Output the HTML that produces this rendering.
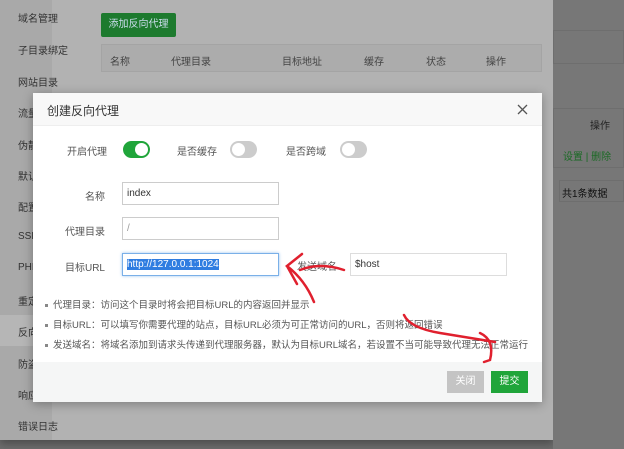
<!DOCTYPE html>
<html><head><meta charset="utf-8"><style>
*{margin:0;padding:0;box-sizing:border-box}
body{width:624px;height:449px;overflow:hidden;background:#6d6d6d;font-family:"Liberation Sans","Noto Sans CJK SC",sans-serif;font-size:12px;color:#333;position:relative}
.abs{position:absolute}
.panel{left:0;top:0;width:553px;height:440px;background:#b2b2b2;box-shadow:0 4px 8px rgba(0,0,0,.3)}
.side{left:0;top:0;width:52px;height:440px;background:#a9a9a9}
.si{position:absolute;left:18px;font-size:10px;color:#333;white-space:nowrap}
.right{left:553px;top:0;width:71px;height:449px;background:#777}
.modal{left:33px;top:93px;width:509px;height:309px;background:#fff;box-shadow:0 2px 10px rgba(0,0,0,.3)}
.hd{height:33px;background:#f8f8f8;border-bottom:1px solid #eee;padding:9px 0 0 14px;font-size:12px;color:#333}
.lbl{position:absolute;font-size:10px;color:#555;text-align:right;width:80px}
.tl{position:absolute;font-size:10px;color:#555;white-space:nowrap}
.inp{position:absolute;width:157px;height:23px;border:1px solid #ccc;background:#fff;font-size:10px;padding:5px 0 0 4px;color:#333}
.tg{position:absolute;width:27px;height:17px;border-radius:9px;background:#ccc}
.tg i{position:absolute;top:2px;left:2px;width:13px;height:13px;border-radius:50%;background:#fff}
.tg.on{background:#20a53a}.tg.on i{left:12px}
.note{position:absolute;left:12px;font-size:9.5px;color:#555;white-space:nowrap}
.note:before{content:"";display:inline-block;width:3px;height:3px;background:#888;margin-right:5px;vertical-align:middle}
.ft{position:absolute;left:0;top:269px;width:509px;height:40px;background:#f5f6f6}
.btn{position:absolute;top:9px;width:37px;height:22px;color:#fff;font-size:10px;text-align:center;line-height:22px}
</style></head><body>
<div class="abs panel">
 <div class="abs side">
  <div class="si" style="top:10px">域名管理</div>
  <div class="si" style="top:42px">子目录绑定</div>
  <div class="si" style="top:74px">网站目录</div>
  <div class="si" style="top:105px">流量</div>
  <div class="si" style="top:137px">伪静</div>
  <div class="si" style="top:168px">默认</div>
  <div class="si" style="top:199px">配置</div>
  <div class="si" style="top:231px">SSL</div>
  <div class="si" style="top:262px">PHP</div>
  <div class="si" style="top:293px">重定</div>
  <div class="abs" style="left:0;top:315px;width:52px;height:31px;background:#b6b6b6"></div>
  <div class="si" style="top:324px">反向</div>
  <div class="si" style="top:356px">防盗</div>
  <div class="si" style="top:387px">响应</div>
  <div class="si" style="top:418px">错误日志</div>
 </div>
 <div class="abs" style="left:101px;top:13px;width:75px;height:24px;background:#1d7a2e;color:#cde;font-size:10px;line-height:24px;text-align:center;border-radius:2px">添加反向代理</div>
 <div class="abs" style="left:101px;top:44px;width:441px;height:28px;background:#acacac;border:1px solid #a4a4a4;font-size:10px;color:#444">
  <span class="abs" style="left:8px;top:8px">名称</span><span class="abs" style="left:69px;top:8px">代理目录</span><span class="abs" style="left:180px;top:8px">目标地址</span><span class="abs" style="left:262px;top:8px">缓存</span><span class="abs" style="left:324px;top:8px">状态</span><span class="abs" style="left:384px;top:8px">操作</span>
 </div>
</div>
<div class="abs right">
 <div class="abs" style="left:0;top:30px;width:71px;height:34px;border:1px solid #6e6e6e"></div>
 <div class="abs" style="left:0;top:108px;width:71px;height:60px;border:1px solid #6e6e6e"></div>
 <div class="abs" style="left:37px;top:117px;font-size:10px;color:#222">操作</div>
 <div class="abs" style="left:10px;top:148px;font-size:10px;color:#1a6a24">设置 | 删除</div>
 <div class="abs" style="left:6px;top:180px;width:65px;height:22px;border:1px solid #6e6e6e;font-size:10px;color:#111;padding:4px 0 0 2px">共1条数据</div>
</div>
<div class="abs modal">
 <div class="hd">创建反向代理</div>
 <svg class="abs" style="left:484px;top:11px" width="11" height="11"><path d="M1 1L10 10M10 1L1 10" stroke="#555" stroke-width="1.3"/></svg>
 <div class="lbl" style="left:-6px;top:50px">开启代理</div>
 <div class="tg on" style="left:90px;top:48px"><i></i></div>
 <div class="tl" style="left:144px;top:50px">是否缓存</div>
 <div class="tg" style="left:197px;top:48px"><i></i></div>
 <div class="tl" style="left:253px;top:50px">是否跨域</div>
 <div class="tg" style="left:307px;top:48px"><i></i></div>
 <div class="lbl" style="left:-8px;top:95px">名称</div>
 <div class="inp" style="left:89px;top:89px">index</div>
 <div class="lbl" style="left:-8px;top:130px">代理目录</div>
 <div class="inp" style="left:89px;top:124px;color:#999">/</div>
 <div class="lbl" style="left:-8px;top:166px">目标URL</div>
 <div class="inp" style="left:89px;top:160px;border-color:#7ab0e8;box-shadow:0 0 3px #9cc4f0"><span style="background:#2f7de1;color:#fff">http://127.0.0.1:1024</span></div>
 <div class="abs" style="left:264px;top:165px;font-size:10px;color:#555">发送域名</div>
 <div class="inp" style="left:317px;top:160px;border-color:#ddd">$host</div>
 <div class="note" style="top:204px">代理目录：访问这个目录时将会把目标URL的内容返回并显示</div>
 <div class="note" style="top:224px">目标URL：可以填写你需要代理的站点，目标URL必须为可正常访问的URL，否则将返回错误</div>
 <div class="note" style="top:244px">发送域名：将域名添加到请求头传递到代理服务器，默认为目标URL域名，若设置不当可能导致代理无法正常运行</div>
 <div class="ft">
  <div class="btn" style="left:414px;background:#c4c4c4">关闭</div>
  <div class="btn" style="left:458px;background:#20a53a">提交</div>
 </div>
</div>
<svg class="abs" style="left:0;top:0" width="624" height="449">
 <g fill="none" stroke="#e0202e" stroke-width="2.5" stroke-linecap="round">
  <path d="M344 270 Q320 262 300 270"/>
  <path d="M314 302 Q305 280 287 266 L302 254 M287 266 L297 284"/>
  <path d="M404 315 Q410 328 440 333 Q470 338 495 342"/>
  <path d="M480 333 Q495 340 490 360 M490 360 L484 362"/>
 </g>
</svg>
</body></html>
